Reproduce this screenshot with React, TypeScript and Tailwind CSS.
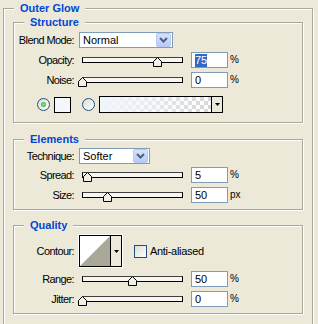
import React from 'react';

const font = "font-['Liberation_Sans',Arial,sans-serif]";

function Title({ children }: { children: React.ReactNode }) {
  return (
    <span className="absolute -top-[8px] left-[10px] bg-[#ece9d8] px-[6px] text-[11px] leading-[14px] font-bold text-[#0046d5]">
      {children}
    </span>
  );
}

function Group({ title, className, children }: { title: string; className: string; children: React.ReactNode }) {
  return (
    <div className={`relative border border-[#aca899] shadow-[1px_1px_0_#fff,inset_1px_1px_0_#fff] ${className}`}>
      <Title>{title}</Title>
      {children}
    </div>
  );
}

function Label({ children }: { children: React.ReactNode }) {
  return <span className="w-[60px] shrink-0 text-right leading-[14px] tracking-[-0.6px]">{children}</span>;
}

function Chevron() {
  return (
    <div className="ml-auto mr-[1px] flex h-[14px] w-[15px] items-center justify-center rounded-[2px] border border-[#b9c9ef] bg-gradient-to-b from-[#d7e2fc] to-[#b8cbf6]">
      <svg width="9" height="6" viewBox="0 0 9 6">
        <polyline points="1,1 4.5,4.5 8,1" fill="none" stroke="#4d6185" strokeWidth="2" />
      </svg>
    </div>
  );
}

function Select({ value, width }: { value: string; width: string }) {
  return (
    <div className={`ml-[5px] flex h-[16px] items-center border border-[#7f9db9] bg-white pl-[3px] ${width}`}>
      <span className="leading-[14px]">{value}</span>
      <Chevron />
    </div>
  );
}

function Slider({ pct }: { pct: number }) {
  return (
    <div className="relative ml-[8px] h-[6px] w-[101px] shrink-0 border border-black border-t-[#404040] bg-[#f7f6f0]">
      <svg width="9" height="10" viewBox="0 0 9 10" className="absolute -top-[1px]" style={{ left: pct - 5 }}>
        <path d="M4.5 0.5 L8.5 4.5 V9.5 H0.5 V4.5 Z" fill="#f1efe6" stroke="#000" />
      </svg>
    </div>
  );
}

function Field({ value, unit, selected }: { value: string; unit: string; selected?: boolean }) {
  return (
    <>
      <div className="ml-[8px] flex h-[16px] w-[37px] items-center border border-[#7f9db9] bg-white pl-[3px]">
        <span className={selected ? 'bg-[#316ac5] leading-[13px] text-white' : 'leading-[13px]'}>{value}</span>
      </div>
      <span className="ml-[2px] text-[10px] leading-[12px]">{unit}</span>
    </>
  );
}

function SliderRow({ label, pct, value, unit, selected, className }: { label: string; pct: number; value: string; unit: string; selected?: boolean; className: string }) {
  return (
    <div className={`flex h-[16px] items-center ${className}`}>
      <Label>{label}</Label>
      <Slider pct={pct} />
      <Field value={value} unit={unit} selected={selected} />
    </div>
  );
}

function Radio({ on }: { on?: boolean }) {
  return (
    <div className="flex h-[13px] w-[13px] shrink-0 items-center justify-center rounded-full border border-[#1c5180] bg-gradient-to-br from-[#dcdcd5] to-white">
      {on && <div className="h-[5px] w-[5px] rounded-full bg-[radial-gradient(circle,#8ee88e,#21a121)]" />}
    </div>
  );
}

export default function App() {
  return (
    <div className={`h-[324px] w-[318px] overflow-hidden bg-[#ece9d8] pl-[3px] pt-[8px] text-[11px] text-black ${font}`}>
      <div className="relative h-[340px] w-[310px] border border-[#aca899] px-[9px] pt-[13px] shadow-[1px_1px_0_#fff,inset_1px_1px_0_#fff]">
        <Title>Outer Glow</Title>

        <Group title="Structure" className="h-[101px] pt-[9px]">
          <div className="flex h-[16px] items-center">
            <Label>Blend Mode:</Label>
            <Select value="Normal" width="w-[94px]" />
          </div>
          <SliderRow label="Opacity:" pct={75} value="75" unit="%" selected className="mt-[4px]" />
          <SliderRow label="Noise:" pct={0} value="0" unit="%" className="mt-[4px]" />
          <div className="mt-[8px] flex h-[17px] items-center pl-[23px]">
            <Radio on />
            <div className="ml-[4px] h-[16px] w-[17px] border border-black bg-[#f4f8fd]" />
            <div className="ml-[11px]">
              <Radio />
            </div>
            <div className="ml-[4px] flex h-[17px] w-[124px] border border-black">
              <div className="flex-1 bg-[repeating-conic-gradient(#d6d6d6_0_25%,#ffffff_0_50%)] bg-[size:8px_8px]">
                <div className="h-full w-full bg-gradient-to-r from-[#f1f5fc] via-[#f1f5fc]/60 to-transparent" />
              </div>
              <div className="flex w-[11px] items-center justify-center border-l border-black bg-[#ece9d8]">
                <svg width="5" height="3" viewBox="0 0 5 3">
                  <path d="M0 0 H5 L2.5 3 Z" fill="#000" />
                </svg>
              </div>
            </div>
          </div>
        </Group>

        <Group title="Elements" className="mt-[16px] h-[71px] pt-[8px]">
          <div className="flex h-[16px] items-center">
            <Label>Technique:</Label>
            <Select value="Softer" width="w-[71px]" />
          </div>
          <SliderRow label="Spread:" pct={5} value="5" unit="%" className="mt-[3px]" />
          <SliderRow label="Size:" pct={25} value="50" unit="px" className="mt-[4px]" />
        </Group>

        <Group title="Quality" className="mt-[15px] h-[89px] pt-[9px]">
          <div className="flex h-[32px] items-center">
            <Label>Contour:</Label>
            <div className="ml-[5px] flex h-[32px] w-[43px] border border-black bg-[#ece9d8] shadow-[0_0_0_1px_#fff]">
              <svg width="30" height="30" viewBox="0 0 30 30" className="shrink-0">
                <rect width="30" height="30" fill="#fff" />
                <path d="M0 30 L30 0 V30 Z" fill="#aca899" />
              </svg>
              <div className="flex flex-1 items-center justify-center border-l border-black">
                <svg width="5" height="3" viewBox="0 0 5 3">
                  <path d="M0 0 H5 L2.5 3 Z" fill="#000" />
                </svg>
              </div>
            </div>
            <div className="ml-[12px] h-[13px] w-[13px] border border-[#1c5180] bg-gradient-to-br from-[#dcdcd5] to-white" />
            <span className="ml-[3px] leading-[14px] tracking-[-0.3px]">Anti-aliased</span>
          </div>
          <SliderRow label="Range:" pct={50} value="50" unit="%" className="mt-[4px]" />
          <SliderRow label="Jitter:" pct={0} value="0" unit="%" className="mt-[4px]" />
        </Group>
      </div>
    </div>
  );
}
